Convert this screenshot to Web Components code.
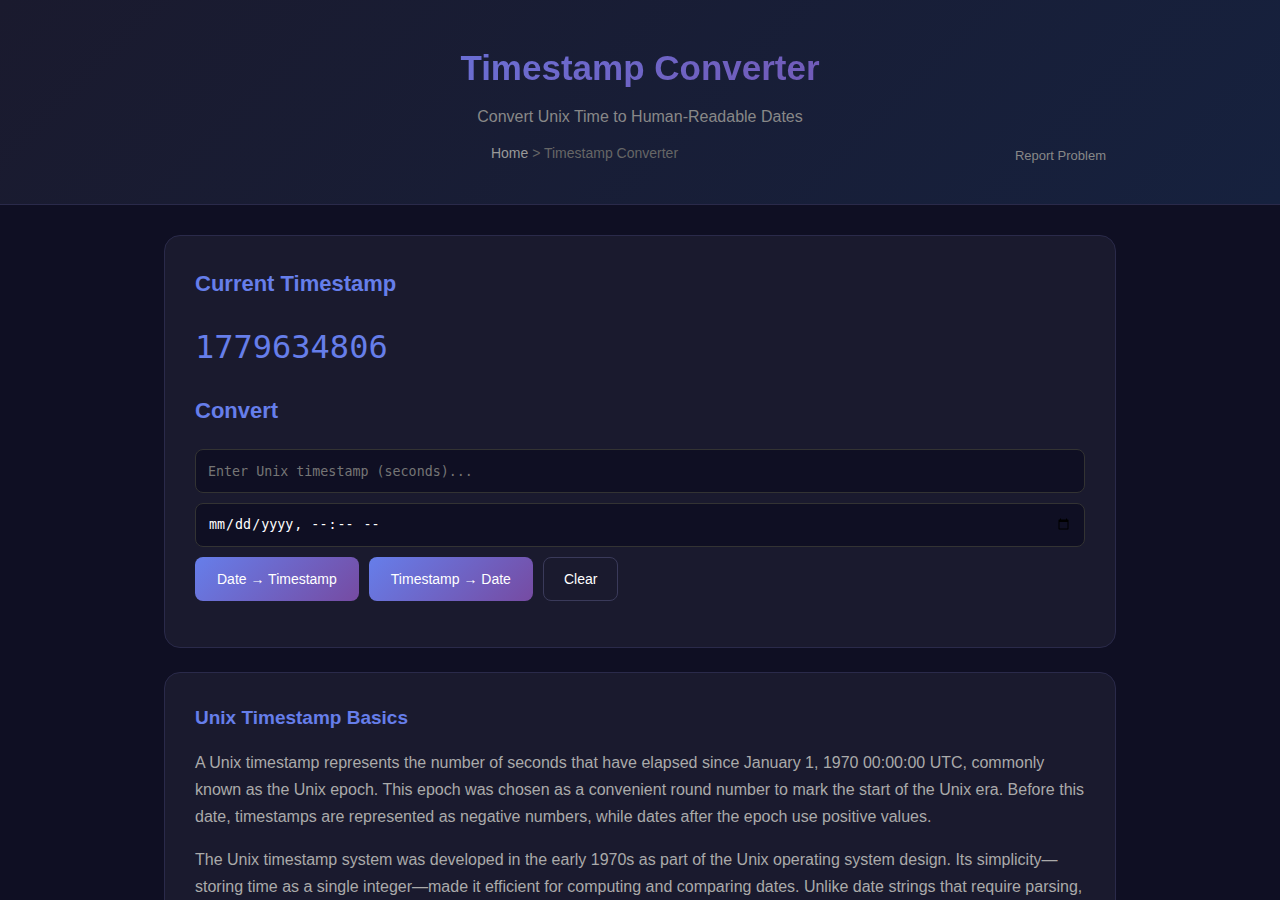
<!DOCTYPE html>
<html lang="en">
<head>
<meta charset="utf-8">
<meta name="viewport" content="width=device-width, initial-scale=1">
<title>Timestamp Converter</title>
<style>
  body {
    margin: 0;
    min-height: 100vh;
    background: #0f0f23;
    color: #e0e0e0;
    font: 16px/26px "Liberation Sans", Arial, sans-serif;
  }
  main {
    max-width: 952px;
    margin: 0 auto;
    padding: 30px 24px;
    display: grid;
    gap: 24px;
  }
</style>
</head>
<body>
<site-header>
  <span slot="title">Timestamp Converter</span>
  <span slot="subtitle">Convert Unix Time to Human-Readable Dates</span>
</site-header>
<main>
  <panel-card>
    <time-converter timestamp="1779634806"></time-converter>
  </panel-card>
  <panel-card>
    <info-article heading="Unix Timestamp Basics">
      <p>A Unix timestamp represents the number of seconds that have elapsed since January 1, 1970 00:00:00 UTC, commonly known as the Unix epoch. This epoch was chosen as a convenient round number to mark the start of the Unix era. Before this date, timestamps are represented as negative numbers, while dates after the epoch use positive values.</p>
      <p>The Unix timestamp system was developed in the early 1970s as part of the Unix operating system design. Its simplicity—storing time as a single integer—made it efficient for computing and comparing dates. Unlike date strings that require parsing,</p>
    </info-article>
  </panel-card>
</main>

<script>
  class BaseElement extends HTMLElement {
    constructor() {
      super();
      this.attachShadow({ mode: "open" }).innerHTML = this.constructor.markup;
    }
  }

  class SiteHeader extends BaseElement {
    static markup = `
      <style>
        :host { display: block; }
        header {
          padding: 40px 24px;
          border-bottom: 1px solid #2a2a4a;
          background: linear-gradient(135deg, #1a1a2e 0%, #16213e 100%);
        }
        .inner { max-width: 952px; margin: 0 auto; text-align: center; }
        h1 {
          margin: 0 0 8px;
          font-size: 35px;
          line-height: 56px;
          background: linear-gradient(135deg, #667eea, #764ba2);
          -webkit-background-clip: text;
          background-clip: text;
          color: transparent;
        }
        p { margin: 0 0 12px; color: #888; }
        .row { display: flex; align-items: flex-end; }
        nav { flex: 1; font-size: 14px; line-height: 22px; color: #666; }
        a { color: #999; text-decoration: none; }
        button {
          border: 0;
          padding: 0 10px;
          background: none;
          color: #888;
          font: 13px/16px "Liberation Sans", Arial, sans-serif;
          cursor: pointer;
        }
      </style>
      <header>
        <div class="inner">
          <h1><slot name="title"></slot></h1>
          <p><slot name="subtitle"></slot></p>
          <div class="row">
            <nav aria-label="Breadcrumb"><a href="#">Home</a> &gt; Timestamp Converter</nav>
            <button type="button">Report Problem</button>
          </div>
        </div>
      </header>`;
  }

  class PanelCard extends BaseElement {
    static markup = `
      <style>
        :host {
          display: block;
          min-width: 0;
          padding: 30px;
          border: 1px solid #2a2a4a;
          border-radius: 16px;
          background: #1a1a2e;
        }
      </style>
      <slot></slot>`;
  }

  class ActionButton extends BaseElement {
    static markup = `
      <style>
        :host { display: block; }
        button {
          box-sizing: border-box;
          height: 44px;
          padding: 0 22px;
          border: 0;
          border-radius: 8px;
          background: linear-gradient(135deg, #667eea, #764ba2);
          color: #fff;
          font: 14px "Liberation Sans", Arial, sans-serif;
          cursor: pointer;
        }
        :host([secondary]) button {
          padding: 0 20px;
          border: 1px solid #3a3a5a;
          background: transparent;
        }
      </style>
      <button type="button"><slot></slot></button>`;
  }

  class TimeConverter extends BaseElement {
    static markup = `
      <style>
        :host { display: block; }
        h2 { margin: 0 0 20px; font-size: 22px; line-height: 36px; color: #667eea; }
        output { display: block; }
        .now {
          margin-bottom: 20px;
          font: 32px/51px "DejaVu Sans Mono", monospace;
          color: #667eea;
        }
        .fields { display: grid; gap: 10px; }
        input {
          box-sizing: border-box;
          width: 100%;
          height: 44px;
          padding: 12px;
          border: 1px solid #333;
          border-radius: 8px;
          background: #0f0f23;
          color: #fff;
          font-family: "DejaVu Sans Mono", monospace;
        }
        .actions { display: flex; flex-wrap: wrap; gap: 10px; }
        .result { margin-top: 16px; }
      </style>
      <h2>Current Timestamp</h2>
      <output class="now"></output>
      <h2>Convert</h2>
      <div class="fields">
        <input id="stamp" type="text" aria-label="Unix timestamp in seconds" placeholder="Enter Unix timestamp (seconds)...">
        <input id="date" type="datetime-local" aria-label="Date and time">
        <div class="actions">
          <action-button id="to-stamp">Date → Timestamp</action-button>
          <action-button id="to-date">Timestamp → Date</action-button>
          <action-button id="clear" secondary>Clear</action-button>
        </div>
      </div>
      <output class="result" for="stamp date"></output>`;

    connectedCallback() {
      const find = (selector) => this.shadowRoot.querySelector(selector);
      const stamp = find("#stamp");
      const date = find("#date");
      const result = find(".result");
      find(".now").textContent = this.getAttribute("timestamp");
      find("#to-stamp").addEventListener("click", () => {
        if (date.value) result.textContent = Math.floor(new Date(date.value) / 1000);
      });
      find("#to-date").addEventListener("click", () => {
        const value = Number(stamp.value);
        result.textContent = stamp.value && Number.isFinite(value)
          ? new Date(value * 1000).toString() : "Please enter a valid timestamp";
      });
      find("#clear").addEventListener("click", () => {
        stamp.value = date.value = result.textContent = "";
      });
    }
  }

  class InfoArticle extends BaseElement {
    static markup = `
      <style>
        :host { display: block; }
        h3 { margin: 0 0 16px; font-size: 19px; line-height: 30px; color: #667eea; }
        ::slotted(p) { margin: 0 0 16px; line-height: 27px; color: #aaa; }
      </style>
      <h3></h3>
      <slot></slot>`;

    connectedCallback() {
      this.shadowRoot.querySelector("h3").textContent = this.getAttribute("heading");
    }
  }

  customElements.define("site-header", SiteHeader);
  customElements.define("panel-card", PanelCard);
  customElements.define("action-button", ActionButton);
  customElements.define("time-converter", TimeConverter);
  customElements.define("info-article", InfoArticle);
</script>
</body>
</html>
